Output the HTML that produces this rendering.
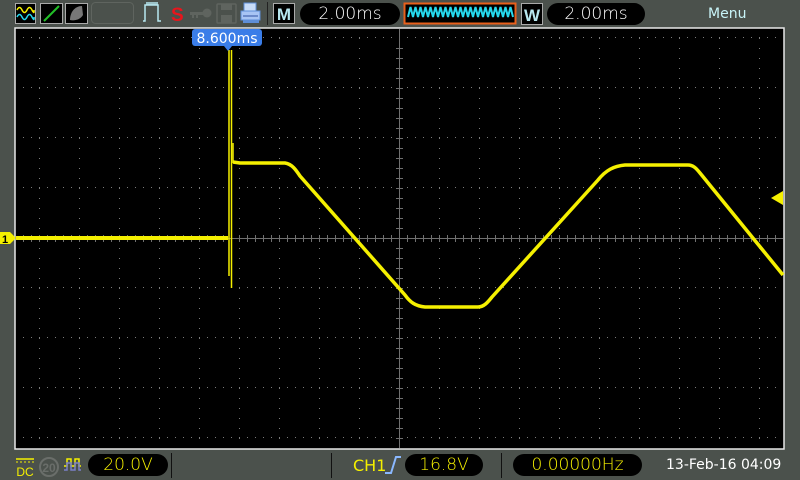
<!DOCTYPE html>
<html><head><meta charset="utf-8"><style>
html,body{margin:0;padding:0;background:#4b514c;}
body{width:800px;height:480px;position:relative;overflow:hidden;font-family:"Liberation Sans",sans-serif;}
.pill{position:absolute;background:#000;border-radius:12px;text-align:center;font-size:17px;line-height:22px;font-family:"DejaVu Sans","Liberation Sans",sans-serif;font-weight:200;}
.abs{position:absolute;font-family:"DejaVu Sans","Liberation Sans",sans-serif;}
</style></head><body>
<svg width="800" height="480" style="position:absolute;left:0;top:0" xmlns="http://www.w3.org/2000/svg">
<defs>
<pattern id="hd" x="0" y="0" width="8" height="50" patternUnits="userSpaceOnUse"><rect x="7" y="37" width="1" height="1" fill="#7a7a7a"/></pattern>
<pattern id="vd" x="0" y="0" width="40" height="10" patternUnits="userSpaceOnUse"><rect x="39" y="8" width="1" height="1" fill="#7a7a7a"/></pattern>
</defs>
<rect x="15" y="28" width="769" height="421" fill="#000" stroke="#e8e8e8" stroke-width="1.5"/>
<rect x="16" y="29" width="767" height="419" fill="url(#hd)"/>
<rect x="16" y="29" width="767" height="419" fill="url(#vd)"/>
<line x1="16" y1="238.5" x2="783" y2="238.5" stroke="#707070" stroke-width="1"/>
<line x1="399.5" y1="29" x2="399.5" y2="448" stroke="#707070" stroke-width="1"/>
<g stroke="#707070" stroke-width="1">
<path d="M23.5 235V242M31.5 235V242M39.5 235V242M47.5 235V242M55.5 235V242M63.5 235V242M71.5 235V242M79.5 235V242M87.5 235V242M95.5 235V242M103.5 235V242M111.5 235V242M119.5 235V242M127.5 235V242M135.5 235V242M143.5 235V242M151.5 235V242M159.5 235V242M167.5 235V242M175.5 235V242M183.5 235V242M191.5 235V242M199.5 235V242M207.5 235V242M215.5 235V242M223.5 235V242M231.5 235V242M239.5 235V242M247.5 235V242M255.5 235V242M263.5 235V242M271.5 235V242M279.5 235V242M287.5 235V242M295.5 235V242M303.5 235V242M311.5 235V242M319.5 235V242M327.5 235V242M335.5 235V242M343.5 235V242M351.5 235V242M359.5 235V242M367.5 235V242M375.5 235V242M383.5 235V242M391.5 235V242M407.5 235V242M415.5 235V242M423.5 235V242M431.5 235V242M439.5 235V242M447.5 235V242M455.5 235V242M463.5 235V242M471.5 235V242M479.5 235V242M487.5 235V242M495.5 235V242M503.5 235V242M511.5 235V242M519.5 235V242M527.5 235V242M535.5 235V242M543.5 235V242M551.5 235V242M559.5 235V242M567.5 235V242M575.5 235V242M583.5 235V242M591.5 235V242M599.5 235V242M607.5 235V242M615.5 235V242M623.5 235V242M631.5 235V242M639.5 235V242M647.5 235V242M655.5 235V242M663.5 235V242M671.5 235V242M679.5 235V242M687.5 235V242M695.5 235V242M703.5 235V242M711.5 235V242M719.5 235V242M727.5 235V242M735.5 235V242M743.5 235V242M751.5 235V242M759.5 235V242M767.5 235V242M775.5 235V242"/>
<path d="M396 48.5H403M396 58.5H403M396 68.5H403M396 78.5H403M396 88.5H403M396 98.5H403M396 108.5H403M396 118.5H403M396 128.5H403M396 138.5H403M396 148.5H403M396 158.5H403M396 168.5H403M396 178.5H403M396 188.5H403M396 198.5H403M396 208.5H403M396 218.5H403M396 228.5H403M396 248.5H403M396 258.5H403M396 268.5H403M396 278.5H403M396 288.5H403M396 298.5H403M396 308.5H403M396 318.5H403M396 328.5H403M396 338.5H403M396 348.5H403M396 358.5H403M396 368.5H403M396 378.5H403M396 388.5H403M396 398.5H403M396 408.5H403M396 418.5H403M396 428.5H403M396 438.5H403"/>
</g>
<g fill="none" stroke="#f5f000" stroke-linejoin="round">
<path d="M16 238H228" stroke-width="4"/>
<path d="M229 50V276" stroke-width="1.5"/>
<path d="M231.5 50V288" stroke-width="1.5"/>
<path d="M233 143V163" stroke-width="1.5"/>
<path d="M233 162L240 163H285C292 164 296 170 300 176L405 295C410 302 415 306 425 307H478C484 307 488 302 492 297L598 180C606 170 614 166 625 165H688C693 165 696 168 700 173L783 275" stroke-width="3.5"/>
</g>
<path d="M0 232H10L16 238L10 244H0Z" fill="#f5f000"/>
<text x="2" y="243" font-size="11" font-weight="bold" fill="#000" font-family="Liberation Sans">1</text>
<path d="M771 198L783 191V205Z" fill="#f5f000"/>
<rect x="192" y="29" width="70" height="17" rx="3" fill="#3a7de8"/>
<path d="M224 46L228 51L232 46Z" fill="#3a7de8"/>
<text x="227" y="43" font-size="14" fill="#fff" text-anchor="middle" font-family="DejaVu Sans, Liberation Sans">8.600ms</text>
<rect x="15.5" y="3.5" width="20" height="20" fill="#000" stroke="#aaa"/>
<path d="M17 10q2.5-5 5 0t5 0t5 0t2 0" stroke="#f5f000" stroke-width="1.5" fill="none"/>
<path d="M17 17q2.5-5 5 0t5 0t5 0t2 0" stroke="#26d8ec" stroke-width="1.5" fill="none"/>
<rect x="40.5" y="3.5" width="22" height="20" fill="#000" stroke="#aaa"/>
<path d="M44 21L59 6" stroke="#22c028" stroke-width="2"/>
<rect x="65.5" y="3.5" width="22" height="20" fill="#000" stroke="#aaa"/>
<path d="M70 20C70 12 75 6 82 6L83 15C80 20 74 21 70 20Z" fill="#777"/>
<rect x="91.5" y="2.5" width="42" height="21" rx="4" fill="none" stroke="#5f645f"/>
<path d="M143 21H145V5H158V21H161M147 5V2M149 5V2M151 5V2M153 5V2M155 5V2M157 5V2" stroke="#b8e8f0" stroke-width="1.5" fill="none"/>
<text x="171" y="21" font-size="19" font-weight="bold" fill="#e8151c" font-family="Liberation Sans">S</text>
<g fill="#5f645f"><rect x="190" y="12" width="14" height="3"/><circle cx="207" cy="13" r="4.5"/><rect x="192" y="15" width="2" height="3"/><rect x="196" y="15" width="2" height="3"/></g>
<rect x="217" y="4" width="19" height="19" rx="1" fill="none" stroke="#5f645f" stroke-width="1.5"/>
<rect x="221" y="4" width="11" height="6" fill="#5f645f"/>
<rect x="221" y="15" width="11" height="8" fill="#5f645f"/>
<rect x="244" y="3" width="12" height="8" fill="#c8dcf8" stroke="#5e8ed8"/>
<rect x="241" y="11" width="19" height="9" fill="#a8c4f4" stroke="#5e8ed8"/>
<line x1="243" y1="16" x2="258" y2="16" stroke="#3050a0"/>
<rect x="243" y="20" width="16" height="3" fill="#5e8ed8"/>
<line x1="267.5" y1="2" x2="267.5" y2="25" stroke="#222"/>
<rect x="273.5" y="3.5" width="21" height="20" fill="#000" stroke="#aaa"/>
<text x="284" y="20" font-size="17" font-weight="bold" fill="#b8e8f0" text-anchor="middle" font-family="Liberation Sans">M</text>
<rect x="404.5" y="3.5" width="111" height="20" fill="#000" stroke="#e8601c" stroke-width="2"/>
<path d="M408 17L410.5 7L413 17L415.5 7L418 17L420.5 7L423 17L425.5 7L428 17L430.5 7L433 17L435.5 7L438 17L440.5 7L443 17L445.5 7L448 17L450.5 7L453 17L455.5 7L458 17L460.5 7L463 17L465.5 7L468 17L470.5 7L473 17L475.5 7L478 17L480.5 7L483 17L485.5 7L488 17L490.5 7L493 17L495.5 7L498 17L500.5 7L503 17L505.5 7L508 17L510.5 7L513 17" stroke="#26d8ec" stroke-width="2" fill="none"/>
<rect x="521.5" y="3.5" width="21" height="21" fill="#000" stroke="#aaa"/>
<text x="532" y="21" font-size="17" font-weight="bold" fill="#b8e8f0" text-anchor="middle" font-family="Liberation Sans">W</text>
<line x1="16" y1="459" x2="34" y2="459" stroke="#f5f000" stroke-width="1.5"/>
<line x1="16" y1="462" x2="34" y2="462" stroke="#f5f000" stroke-width="1" stroke-dasharray="2 2"/>
<text x="25" y="476" font-size="12" fill="#f5f000" text-anchor="middle" font-family="Liberation Sans">DC</text>
<circle cx="49" cy="467" r="9" fill="none" stroke="#6a6e6a" stroke-width="2"/>
<text x="49" y="472" font-size="12" font-weight="bold" fill="#6a6e6a" text-anchor="middle" font-family="Liberation Sans">20</text>
<path d="M64 466H67V459H71V466H75V459H79V466H81" stroke="#f5f000" stroke-width="1.5" fill="none"/>
<path d="M64 470H67V463H71V470H75V463H79V470H81" stroke="#7b80c8" stroke-width="1.5" fill="none"/>
<line x1="171.5" y1="453" x2="171.5" y2="478" stroke="#111"/>
<line x1="331.5" y1="453" x2="331.5" y2="478" stroke="#111"/>
<line x1="501.5" y1="453" x2="501.5" y2="478" stroke="#111"/>
<path d="M385 473H391L396 457H401" stroke="#8ab8ff" stroke-width="2" fill="none"/>
</svg>
<div class="pill" style="left:300px;top:3px;width:100px;color:#fff;">2.00ms</div>
<div class="pill" style="left:547px;top:3px;width:98px;color:#fff;">2.00ms</div>
<div class="abs" style="left:708px;top:6px;font-size:14px;color:#c8f4f8;">Menu</div>
<div class="pill" style="left:88px;top:454px;width:80px;color:#f5f000;">20.0V</div>
<div class="abs" style="left:353px;top:456px;font-size:16px;color:#f5f000;">CH1</div>
<div class="pill" style="left:405px;top:454px;width:78px;color:#f5f000;">16.8V</div>
<div class="pill" style="left:513px;top:454px;width:129px;color:#f5f000;">0.00000Hz</div>
<div class="abs" style="left:666px;top:457px;font-size:14px;color:#fff;">13-Feb-16 04:09</div>
</body></html>
